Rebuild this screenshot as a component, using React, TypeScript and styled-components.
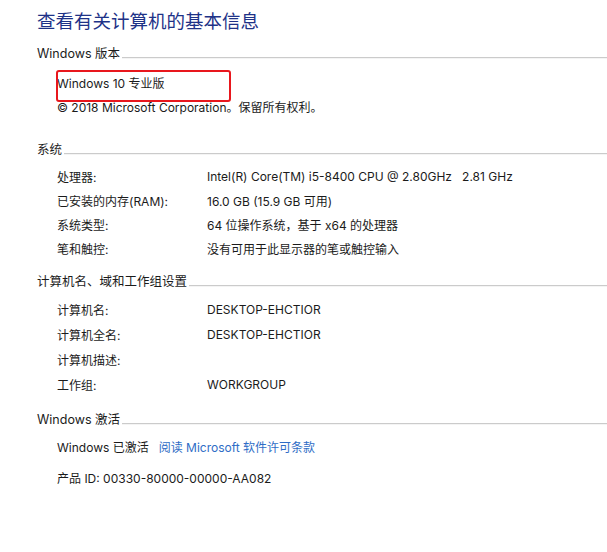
import React from 'react'
import styled, { createGlobalStyle } from 'styled-components'

const GlobalStyle = createGlobalStyle`
  html, body {
    margin: 0;
    padding: 0;
    background: #ffffff;
  }
  body {
    font-family: Inter, "Noto Sans CJK SC", sans-serif;
    font-size: 12px;
    color: #1b1b1b;
  }
`

const SYSTEM_ROWS = [
  { label: '处理器:', value: 'Intel(R) Core(TM) i5-8400 CPU @ 2.80GHz   2.81 GHz' },
  { label: '已安装的内存(RAM):', value: '16.0 GB (15.9 GB 可用)' },
  { label: '系统类型:', value: '64 位操作系统，基于 x64 的处理器' },
  { label: '笔和触控:', value: '没有可用于此显示器的笔或触控输入' },
]

const COMPUTER_ROWS = [
  { label: '计算机名:', value: 'DESKTOP-EHCTIOR' },
  { label: '计算机全名:', value: 'DESKTOP-EHCTIOR' },
  { label: '计算机描述:', value: '' },
  { label: '工作组:', value: 'WORKGROUP' },
]

const App = () => {
  return (
    <>
      <GlobalStyle />
      <Page>
        <Title>查看有关计算机的基本信息</Title>

        <Section gap={11}>
          <SectionHeader after={6}>
            <HeaderText>Windows 版本</HeaderText>
            <HeaderLine />
          </SectionHeader>
          <Row h={24}>
            <Highlighted>
              Windows 10 专业版
              <RedBox />
            </Highlighted>
          </Row>
          <Row h={24}>© 2018 Microsoft Corporation。保留所有权利。</Row>
        </Section>

        <Section gap={22}>
          <SectionHeader after={4}>
            <HeaderText>系统</HeaderText>
            <HeaderLine />
          </SectionHeader>
          {SYSTEM_ROWS.map((row) => (
            <InfoRow key={row.label} h={24}>
              <Label>{row.label}</Label>
              <Value>{row.value}</Value>
            </InfoRow>
          ))}
        </Section>

        <Section gap={12}>
          <SectionHeader after={5}>
            <HeaderText>计算机名、域和工作组设置</HeaderText>
            <HeaderLine />
          </SectionHeader>
          {COMPUTER_ROWS.map((row) => (
            <InfoRow key={row.label} h={25}>
              <Label>{row.label}</Label>
              <Value>{row.value}</Value>
            </InfoRow>
          ))}
        </Section>

        <Section gap={13}>
          <SectionHeader after={4}>
            <HeaderText>Windows 激活</HeaderText>
            <HeaderLine />
          </SectionHeader>
          <Row h={24}>
            Windows 已激活
            <Link href="#">阅读 Microsoft 软件许可条款</Link>
          </Row>
          <Row h={24} top={7}>产品 ID: 00330-80000-00000-AA082</Row>
        </Section>
      </Page>
    </>
  )
}

export default App

const Page = styled.div`
  width: 607px;
  height: 552px;
  box-sizing: border-box;
  padding: 9px 0 0 37px;
  overflow: hidden;
`

const Title = styled.h1`
  margin: 0;
  font-size: 18.5px;
  line-height: 24px;
  font-weight: 400;
  color: #1e3287;
`

const Section = styled.section<{ gap: number }>`
  margin-top: ${(p) => p.gap}px;
`

const SectionHeader = styled.div<{ after: number }>`
  display: flex;
  align-items: flex-start;
  height: 20px;
  margin-bottom: ${(p) => p.after}px;
`

const HeaderText = styled.span`
  font-size: 12.5px;
  line-height: 20px;
  white-space: nowrap;
`

const HeaderLine = styled.div`
  flex: 1;
  margin-top: 13px;
  margin-left: 2px;
  border-top: 1px solid #cbcbcb;
  border-bottom: 1px solid #f4f4f4;
`

const Row = styled.div<{ h: number; top?: number }>`
  display: flex;
  align-items: center;
  height: ${(p) => p.h}px;
  margin-top: ${(p) => p.top || 0}px;
  padding-left: 20px;
  white-space: pre;
`

const InfoRow = styled.div<{ h: number }>`
  display: grid;
  grid-template-columns: 150px 1fr;
  align-items: center;
  height: ${(p) => p.h}px;
  padding-left: 20px;
`

const Label = styled.span`
  white-space: nowrap;
`

const Value = styled.span`
  white-space: pre;
`

const Highlighted = styled.span`
  position: relative;
`

const RedBox = styled.span`
  position: absolute;
  left: -1px;
  top: -4px;
  width: 175px;
  height: 32px;
  box-sizing: border-box;
  border: 2px solid #e8171d;
  border-radius: 3px;
`

const Link = styled.a`
  margin-left: 10px;
  color: #2f6dc6;
  text-decoration: none;
`
